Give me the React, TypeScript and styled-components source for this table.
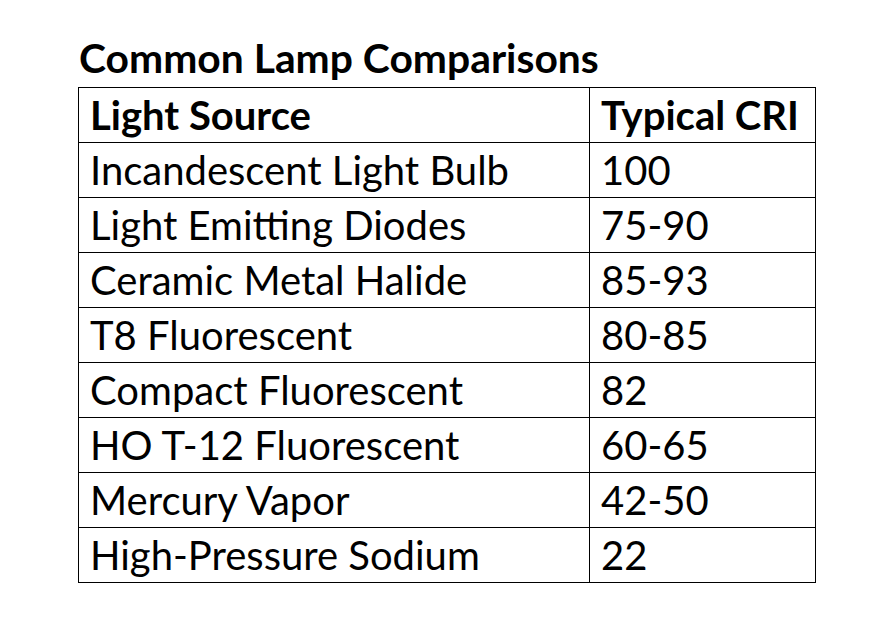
import React from 'react';
import styled, { createGlobalStyle } from 'styled-components';

const GlobalStyle = createGlobalStyle`
  html, body {
    margin: 0;
    padding: 0;
    background: #ffffff;
  }
  body {
    font-family: Lato, "Liberation Sans", sans-serif;
    color: #000000;
  }
`;

const Page = styled.div`
  width: 891px;
  height: 642px;
  padding: 34px 0 0 78px;
  box-sizing: border-box;
`;

const Title = styled.div`
  font-size: 40.8px;
  font-weight: 700;
  line-height: 48px;
  padding-left: 1px;
  margin-bottom: 5px;
`;

const Table = styled.table`
  border-collapse: collapse;
  width: 738px;
`;

const Cell = styled.td<{ $bold?: boolean; $wide?: boolean }>`
  border: 1px solid #000000;
  height: 55px;
  box-sizing: border-box;
  padding: 0 0 0 11px;
  width: ${(p) => (p.$wide ? '511px' : 'auto')};
  font-size: 40px;
  line-height: 48px;
  font-weight: ${(p) => (p.$bold ? 700 : 400)};
  vertical-align: middle;
  white-space: nowrap;
`;

const rows: [string, string][] = [
  ['Incandescent Light Bulb', '100'],
  ['Light Emitting Diodes', '75-90'],
  ['Ceramic Metal Halide', '85-93'],
  ['T8 Fluorescent', '80-85'],
  ['Compact Fluorescent', '82'],
  ['HO T-12 Fluorescent', '60-65'],
  ['Mercury Vapor', '42-50'],
  ['High-Pressure Sodium', '22'],
];

const App = () => {
  return (
    <Page>
      <GlobalStyle />
      <Title>Common Lamp Comparisons</Title>
      <Table>
        <tbody>
          <tr>
            <Cell $bold $wide>Light Source</Cell>
            <Cell $bold>Typical CRI</Cell>
          </tr>
          {rows.map(([source, cri]) => (
            <tr key={source}>
              <Cell $wide>{source}</Cell>
              <Cell>{cri}</Cell>
            </tr>
          ))}
        </tbody>
      </Table>
    </Page>
  );
};

export default App;
